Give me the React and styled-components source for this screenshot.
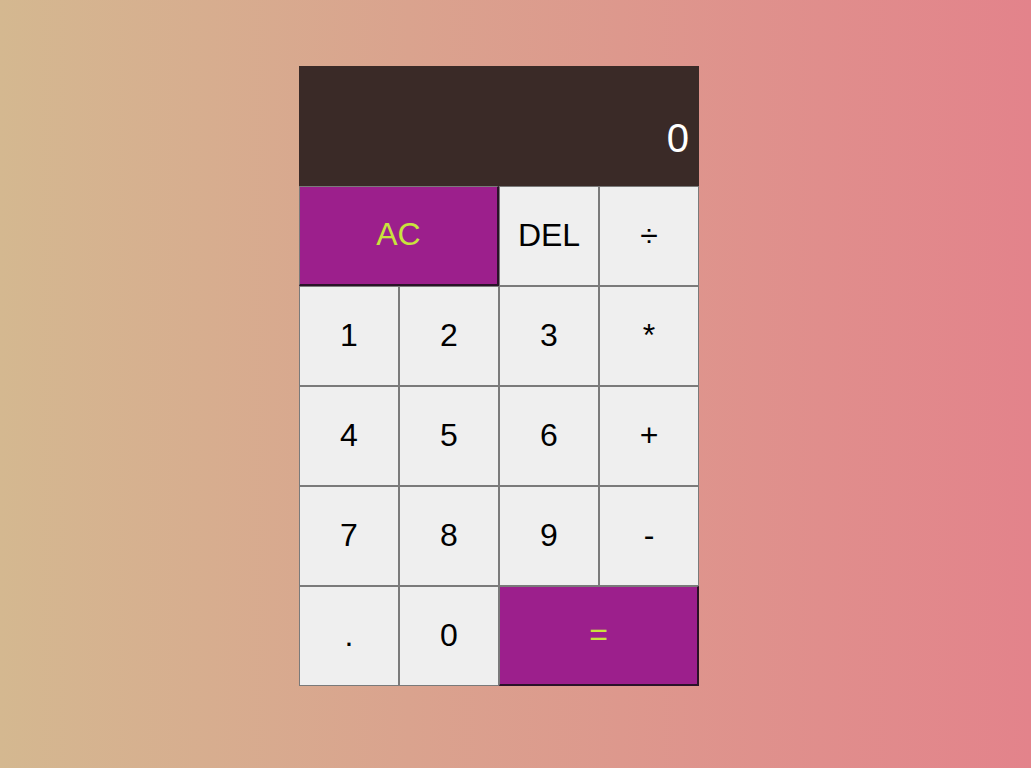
import React from "react";
import styled, { createGlobalStyle } from "styled-components";

const GlobalStyle = createGlobalStyle`
  *, *::before, *::after {
    box-sizing: border-box;
  }
  body {
    margin: 0;
    font-family: "Liberation Sans", Arial, sans-serif;
    background: linear-gradient(to right, #d4b890, #e3838b);
    min-height: 100vh;
  }
`;

const keys = [
  { label: "AC", span: 2, accent: true },
  { label: "DEL" },
  { label: "÷" },
  { label: "1" },
  { label: "2" },
  { label: "3" },
  { label: "*" },
  { label: "4" },
  { label: "5" },
  { label: "6" },
  { label: "+" },
  { label: "7" },
  { label: "8" },
  { label: "9" },
  { label: "-" },
  { label: "." },
  { label: "0" },
  { label: "=", span: 2, accent: true },
];

function App() {
  return (
    <Page>
      <GlobalStyle />
      <CalculatorGrid>
        <Output>
          <PreviousOperand></PreviousOperand>
          <CurrentOperand>0</CurrentOperand>
        </Output>
        {keys.map((k, i) => (
          <Key key={i} $span={k.span} $accent={k.accent}>
            {k.label}
          </Key>
        ))}
      </CalculatorGrid>
    </Page>
  );
}

const Page = styled.div`
  min-height: 768px;
  padding: 66px 0 0 299px;
`;

const CalculatorGrid = styled.div`
  display: grid;
  grid-template-columns: repeat(4, 100px);
  grid-template-rows: 120px repeat(5, 100px);
`;

const Output = styled.div`
  grid-column: 1 / -1;
  background-color: #3a2a27;
  display: flex;
  flex-direction: column;
  align-items: flex-end;
  justify-content: flex-end;
  padding: 10px 10px 25px;
`;

const PreviousOperand = styled.div`
  color: rgba(255, 255, 255, 0.75);
  font-size: 24px;
`;

const CurrentOperand = styled.div`
  color: #ffffff;
  font-size: 40px;
  line-height: 46px;
`;

const Key = styled.button`
  grid-column: ${(p) => (p.$span ? `span ${p.$span}` : "auto")};
  font-family: "Liberation Sans", Arial, sans-serif;
  font-size: 32px;
  cursor: pointer;
  outline: none;
  padding: 0 0 2px;
  border: 1px solid #7a7a7a;
  border-color: ${(p) =>
    p.$accent ? "#7a7a7a #2a1228 #2a1228 #7a7a7a" : "#7a7a7a"};
  border-width: ${(p) => (p.$accent ? "1px 2px 2px 1px" : "1px")};
  background-color: ${(p) => (p.$accent ? "#9c1f8c" : "#efefef")};
  color: ${(p) => (p.$accent ? "#c9e33c" : "#000000")};
`;

export default App;
